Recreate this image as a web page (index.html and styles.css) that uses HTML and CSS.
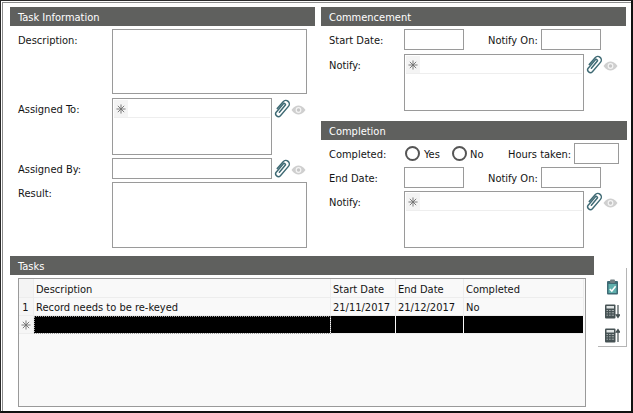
FILE: index.html
```html
<!DOCTYPE html>
<html lang="en">
<head>
<meta charset="utf-8">
<title>Task</title>
<link rel="stylesheet" href="styles.css">
</head>
<body>
<svg class="defs" width="0" height="0" aria-hidden="true">
  <defs>
    <symbol id="star" viewBox="0 0 11 11">
      <path d="M5.5 0.5v10M0.5 5.5h10M2 2l7 7M9 2l-7 7" stroke="#707070" stroke-width="1" fill="none"/>
    </symbol>
    <symbol id="clip" viewBox="0 0 17 18">
      <path d="M6 12.5 11.5 6a1.1 1.1 0 0 0-1.7-1.4L3 12.5a2.6 2.6 0 0 0 4 3.3L14.6 7a3.3 3.3 0 0 0-5-4.4L4 9" stroke="#3f6a74" stroke-width="1.4" fill="none" stroke-linecap="round"/>
    </symbol>
    <symbol id="eye" viewBox="0 0 15 10">
      <path d="M0.5 5C3 1.4 5.2 0.5 7.5 0.5S12 1.4 14.5 5C12 8.6 9.8 9.5 7.5 9.5S3 8.6 0.5 5Z" fill="#cfcfcf"/>
      <circle cx="7.5" cy="5" r="2.9" fill="#f4f4f4"/>
      <circle cx="7.5" cy="5" r="1.7" fill="#c6c6c6"/>
    </symbol>
    <symbol id="calc" viewBox="0 0 15 15">
      <rect x="0" y="0.5" width="10.5" height="14" rx="1" fill="#465254"/>
      <rect x="1.5" y="2" width="7.5" height="2.5" fill="#dfe4e4"/>
      <path d="M1.5 6.5h7.5M1.5 8.8h7.5M1.5 11.2h7.5" stroke="#a5adad" stroke-width="1"/>
      <path d="M3.5 5.5v8M6.2 5.5v8" stroke="#465254" stroke-width="1"/>
    </symbol>
  </defs>
</svg>

<div class="window">
  <div class="pane">
    <div class="top">
      <section class="panel">
        <h2 class="bar">Task Information</h2>
        <div class="form">
          <div class="row"><span class="label">Description:</span><div class="box tall"></div></div>
          <div class="row"><span class="label">Assigned To:</span>
            <div class="box lookup">
              <div class="lookup-row"><span class="star"><svg class="star-ic"><use href="#star"/></svg></span></div>
            </div>
            <span class="tools"><svg class="clip"><use href="#clip"/></svg><svg class="eye"><use href="#eye"/></svg></span>
          </div>
          <div class="row"><span class="label">Assigned By:</span><div class="box single"></div>
            <span class="tools"><svg class="clip"><use href="#clip"/></svg><svg class="eye"><use href="#eye"/></svg></span>
          </div>
          <div class="row"><span class="label">Result:</span><div class="box result"></div></div>
        </div>
      </section>

      <div class="right">
        <section class="panel">
          <h2 class="bar">Commencement</h2>
          <div class="form side first">
            <div class="row"><span class="label">Start Date:</span><div class="box date"></div><span class="label on">Notify On:</span><div class="box date"></div></div>
            <div class="row"><span class="label">Notify:</span>
              <div class="box lookup wide">
                <div class="lookup-row"><span class="star"><svg class="star-ic"><use href="#star"/></svg></span></div>
              </div>
              <span class="tools"><svg class="clip"><use href="#clip"/></svg><svg class="eye"><use href="#eye"/></svg></span>
            </div>
          </div>
        </section>
        <section class="panel completion">
          <h2 class="bar">Completion</h2>
          <div class="form side">
            <div class="row"><span class="label">Completed:</span>
              <span class="radio"></span><span class="opt yes">Yes</span>
              <span class="radio"></span><span class="opt no">No</span>
              <span class="label hours">Hours taken:</span><div class="box hrs"></div>
            </div>
            <div class="row"><span class="label">End Date:</span><div class="box date"></div><span class="label on">Notify On:</span><div class="box date"></div></div>
            <div class="row"><span class="label">Notify:</span>
              <div class="box lookup wide">
                <div class="lookup-row"><span class="star"><svg class="star-ic"><use href="#star"/></svg></span></div>
              </div>
              <span class="tools"><svg class="clip"><use href="#clip"/></svg><svg class="eye"><use href="#eye"/></svg></span>
            </div>
          </div>
        </section>
      </div>
    </div>

    <section class="tasks">
      <div class="tasks-main">
        <h2 class="bar">Tasks</h2>
        <div class="grid-wrap">
          <table class="grid">
            <colgroup><col class="c-i"><col class="c-d"><col class="c-s"><col class="c-e"><col class="c-c"></colgroup>
            <thead>
              <tr><th></th><th>Description</th><th>Start Date</th><th>End Date</th><th>Completed</th></tr>
            </thead>
            <tbody>
              <tr><td class="idx">1</td><td>Record needs to be re-keyed</td><td>21/11/2017</td><td>21/12/2017</td><td>No</td></tr>
              <tr class="new"><td class="idx"><svg class="star-ic"><use href="#star"/></svg></td><td class="focus"></td><td></td><td></td><td></td></tr>
            </tbody>
          </table>
        </div>
      </div>
      <div class="toolbar">
        <svg class="t-ic" width="15" height="16" viewBox="0 0 15 16">
          <rect x="2" y="2" width="11" height="13.5" rx="1" fill="#3f6a74"/>
          <rect x="3.5" y="5" width="8" height="9" fill="#5fb0ad"/>
          <rect x="5" y="0.5" width="5" height="3.5" rx="1" fill="#6f7f82"/>
          <path d="M4.8 10 6.8 12 10.6 7.2" stroke="#fff" stroke-width="1.5" fill="none"/>
        </svg>
        <svg class="t-ic" width="15" height="15" viewBox="0 0 15 15">
          <use href="#calc" width="15" height="15"/>
          <path d="M13 1v12M11.2 10.8 13 13.5l1.8-2.7z" stroke="#465254" stroke-width="1.2" fill="#465254"/>
        </svg>
        <svg class="t-ic" width="15" height="15" viewBox="0 0 15 15">
          <use href="#calc" width="15" height="15"/>
          <path d="M13 14V2M11.2 4.2 13 1.5l1.8 2.7z" stroke="#465254" stroke-width="1.2" fill="#465254"/>
        </svg>
      </div>
    </section>
  </div>
</div>
</body>
</html>
```
FILE: styles.css
```css
* { box-sizing: border-box; }
html, body { margin: 0; padding: 0; background: #fff; }
.defs { position: absolute; }
body { font-family: "DejaVu Sans Condensed", "DejaVu Sans", sans-serif; font-size: 11px; color: #141414; }

.window {
  width: 633px; height: 413px;
  border-style: solid; border-color: #2a2a2a #111 #111 #2a2a2a;
  border-width: 1px 2px 2px 1px;
  padding: 1px 0 0 1px;
  background: #fff;
}
.pane {
  height: 100%;
  border-top: 1px solid #8c8c8c;
  border-left: 1px solid #8c8c8c;
  padding: 4px 0 0 7px;
}

.top { display: flex; gap: 6px; height: 249px; }
.panel { width: 305px; }
.right { width: 306px; }
.bar {
  margin: 0; height: 19px; padding-left: 8px;
  background: #5f605e; color: #fff;
  font-size: 11px; font-weight: normal; line-height: 21px;
}
.completion { margin-top: 10px; width: 306px; }

.form { padding: 3px 0 0 8px; display: flex; flex-direction: column; gap: 3px; }
.form.first { gap: 4px; }
.row { display: flex; align-items: flex-start; }
.label { flex: none; width: 94px; height: 21px; line-height: 23px; white-space: nowrap; }
.side .label { width: 75px; }
.side .label.on { width: 53px; margin: 0 0 0 24px; }
.side .label.hours { width: 66px; }

.box { border: 1px solid #9a9a9a; background: #fff; flex: none; }
.tall { width: 195px; height: 65px; margin-bottom: 1px; }
.result { width: 195px; height: 66px; }
.single { width: 160px; height: 21px; }
.lookup { width: 160px; height: 57px; padding: 1px; }
.lookup.wide { width: 180px; }
.lookup-row { height: 18px; border-bottom: 1px solid #eeeeee; }
.star { display: flex; width: 14px; height: 17px; background: #f4f4f4; align-items: center; justify-content: center; }
.star-ic { width: 10px; height: 10px; display: block; }

.tools { display: flex; align-items: flex-start; flex: none; margin-left: 1px; }
.clip { width: 18px; height: 19px; margin-top: 1px; }
.eye { width: 15px; height: 10px; margin-top: 7px; }

.date { width: 60px; height: 21px; }
.hrs { width: 45px; height: 21px; }
.radio { flex: none; width: 15px; height: 15px; margin-top: 3px; border: 2px solid #555; border-radius: 50%; background: #fff; }
.opt { height: 21px; line-height: 23px; flex: none; }
.opt.yes { margin-left: 4px; width: 28px; }
.opt.no { margin-left: 3px; width: 38px; }
.label + .radio { margin-left: 1px; }

.tasks { display: flex; }
.tasks-main { width: 584px; }
.grid-wrap {
  margin: 3px 0 0 8px; width: 568px; height: 129px;
  border: 1px solid #9a9a9a; background: #f9f9f9;
}
.grid { table-layout: fixed; border-collapse: separate; border-spacing: 0; width: 565px; }
.c-i { width: 15px; } .c-d { width: 297px; } .c-s { width: 65px; } .c-e { width: 68px; } .c-c { width: 120px; }
.grid th, .grid td {
  height: 18px; padding: 2px 0 0 2px; font-weight: normal; text-align: left;
  border-right: 1px solid #ededed; border-bottom: 1px solid #ededed;
  white-space: nowrap; overflow: hidden;
}
.grid th { height: 19px; }
.grid th:first-child { background: #f4f4f4; }
.grid td.idx { padding: 2px 1px 0 0; text-align: center; background: #f6f6f6; }
.grid .new td.idx { padding: 0; }
.grid .idx .star-ic { margin: 0 auto; }
.grid .new td { background: #000; border-right: 1px solid #f9f9f9; border-bottom: 1px solid #ededed; }
.grid .new td.idx { background: #f6f6f6; border-right-color: #ededed; }
.grid .new td.focus { outline: 1px dotted #999; outline-offset: -1px; }

.toolbar {
  flex: none; width: 29px; height: 79px; margin: 12px 0 0 4px;
  border-right: 1px solid #b5b5b5; border-bottom: 1px solid #b5b5b5;
  display: flex; flex-direction: column; align-items: flex-end;
  padding: 11px 6px 0 0; gap: 9px;
}
.t-ic { display: block; }
```
